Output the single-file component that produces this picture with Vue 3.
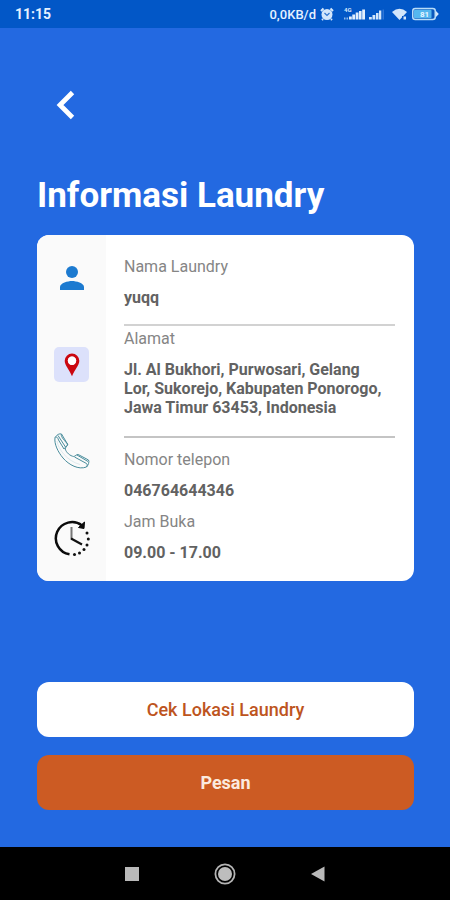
<script setup>
const address = [
  'Jl. Al Bukhori, Purwosari, Gelang',
  'Lor, Sukorejo, Kabupaten Ponorogo,',
  'Jawa Timur 63453, Indonesia'
].join('\n')
</script>

<template>
  <div class="screen">
    <header class="status">
      <span class="time">11:15</span>
      <div class="indicators">
        <span class="rate">0,0KB/d</span>
        <svg class="alarm" width="14" height="14" viewBox="0 0 14 14" aria-hidden="true">
          <circle cx="7" cy="7.5" r="5.5" fill="#d3e6fb" />
          <path d="M1 4 3.500 1.500M13 4 10.500 1.500M3 12 2 13M11 12 12 13" stroke="#d3e6fb" stroke-width="2" />
          <path d="M4.500 6 7 8.500 9.500 6" fill="none" stroke="#2f74cf" stroke-width="1.200" />
        </svg>
        <svg class="signal-first" width="24" height="14" viewBox="0 0 24 14" aria-hidden="true">
          <text x="2" y="5" class="net">4G</text>
          <path d="M7 12.500V9.500h2.800v3zM10.300 12.500V7.500h2.800v5zM13.700 12.500V5.500h2.800v7zM17 12.500V4h2.600v8.500zM20.200 12.500V2.500h2.800v10z" fill="#e3effc" />
          <path d="M2 12.500v-2h1.500v2zM4.500 12.500v-2h1.500v2z" fill="#8db9ec" />
        </svg>
        <svg width="16" height="14" viewBox="0 0 16 14" aria-hidden="true">
          <path d="M0 12.500V10h2.800v2.500zM3.500 12.500V8h2.800v4.500zM7 12.500V6h2.500v6.500zM10 12.500V3.500h2.300v9z" fill="#d3e6fb" />
          <path d="M13.500 12.500V2.500H15v10z" fill="#2f76d6" />
        </svg>
        <svg class="wifi" width="16" height="14" viewBox="0 0 16 14" aria-hidden="true">
          <path d="M0 5Q7.500-1.500 15 5L7.500 13z" fill="#d3e6fb" />
          <path d="M10 9h5v4h-5z" fill="#0757c7" />
          <path d="M11.500 9.500H14V12.500h-2.500z" fill="#d3e6fb" />
        </svg>
        <svg width="27" height="14" viewBox="0 0 27 14" aria-hidden="true">
          <rect x=".75" y="1.500" width="22.500" height="11" rx="2.500" fill="#0b58bd" stroke="#b8dcf8" stroke-width="1.500" />
          <rect x="2" y="2.750" width="17.500" height="8.500" rx="1" fill="#55b7ef" />
          <path d="M24 4 26.800 7 24 10z" fill="#d3e6fb" />
          <text x="8" y="10" class="charge">81</text>
        </svg>
      </div>
    </header>

    <main class="content">
      <button class="back" type="button" aria-label="Kembali">
        <svg width="20" height="30" viewBox="0 0 20 30" aria-hidden="true">
          <path d="M17.500 2.500 5 15 17.500 27.500" fill="none" stroke="#fff" stroke-width="4.800" />
        </svg>
      </button>

      <h1>Informasi Laundry</h1>

      <section class="card">
        <div class="icons" aria-hidden="true">
          <div class="cell">
            <svg width="24" height="24" viewBox="0 0 24 24">
              <circle cx="12" cy="6" r="6" fill="#1c7ad0" />
              <path d="M0 24v-3c0-4 8-6 12-6s12 2 12 6v3z" fill="#1c7ad0" />
            </svg>
          </div>
          <div class="cell">
            <div class="pin">
              <svg width="16" height="24" viewBox="0 0 16 24">
                <path fill-rule="evenodd" d="M8 .5a7.300 7.300 0 0 0-7.300 7.300c0 4.700 4.800 9 7.300 15.500 2.500-6.500 7.300-10.800 7.300-15.500A7.300 7.300 0 0 0 8 .5zm0 3a4.200 4.200 0 1 1 0 8.400 4.200 4.200 0 0 1 0-8.400z" fill="#cb0710" />
                <circle cx="8" cy="7.700" r="4.200" fill="#fff" />
              </svg>
            </div>
          </div>
          <div class="cell">
            <svg width="36" height="36" viewBox="0 0 36 36" fill="none" stroke="#4a8d9c" stroke-width="1" stroke-linejoin="round">
              <path d="M1 4.500C3 1.500 5.500.3 7.500 1L13.500 11c.3 2-2.500 3.500-2.300 5 1 3.500 5 7 8.500 7.500 1.500 0 3-2.500 4.500-2L34.500 27c1 1.500 0 5-2 7-8 3-17.500-2-23.500-9C4 19 0 11 1 4.500z" />
              <path d="M1.500 4.500C3 3.500 4 5 4.500 7l5.500 9M4 2.500 11.500 14M7.500 1C6.500 3 9 6 13.500 11M20.500 24l12 6.500c.8.5 1 2 0 3.500M23 22l11 6.500M10 16c0-1 3-2.500 4-5" />
              <path d="M3 8c1 8 10 20 23 23.500" stroke="#cfe2e6" stroke-width=".7" />
            </svg>
          </div>
          <div class="cell">
            <svg width="36" height="36" viewBox="0 0 36 36" fill="none">
              <path d="M15.500 34.300A16.200 16.200 0 1 1 28 5.500" stroke="#0b0b0b" stroke-width="2.500" />
              <path d="M30.500 2 30 8.500 24.500 7.500z" fill="#0b0b0b" stroke="#0b0b0b" />
              <path d="M17.500 7v12" stroke="#777" stroke-width="2" />
              <path d="m17 18.500 11 6" stroke="#111" stroke-width="2.200" />
              <g fill="#111">
                <circle cx="33" cy="13" r="1.500" />
                <circle cx="34.300" cy="19" r="1.500" />
                <circle cx="33" cy="25" r="1.500" />
                <circle cx="30" cy="29.500" r="1.500" />
                <circle cx="25.500" cy="33" r="1.500" />
                <circle cx="20.500" cy="34.500" r="1.500" />
              </g>
            </svg>
          </div>
        </div>

        <dl class="details">
          <div class="entry">
            <dt>Nama Laundry</dt>
            <dd>yuqq</dd>
          </div>
          <div class="entry address">
            <dt>Alamat</dt>
            <dd>{{ address }}</dd>
          </div>
          <div class="entry contact">
            <dt>Nomor telepon</dt>
            <dd>046764644346</dd>
          </div>
          <div class="entry hours">
            <dt>Jam Buka</dt>
            <dd>09.00 - 17.00</dd>
          </div>
        </dl>
      </section>

      <div class="actions">
        <button class="action locate" type="button">Cek Lokasi Laundry</button>
        <button class="action order" type="button">Pesan</button>
      </div>
    </main>

    <nav class="system" aria-label="Navigasi sistem">
      <button type="button" aria-label="Aplikasi terbaru">
        <svg width="22" height="22" viewBox="0 0 22 22"><path d="M4 4h14v14H4z" fill="#b9b9b9" /></svg>
      </button>
      <button type="button" aria-label="Beranda">
        <svg width="22" height="22" viewBox="0 0 22 22">
          <circle cx="11" cy="11" r="9.600" fill="none" stroke="#b4b4b4" stroke-width="1.800" />
          <circle cx="11" cy="11" r="7" fill="#bdbdbd" />
        </svg>
      </button>
      <button type="button" aria-label="Kembali ke layar sebelumnya">
        <svg width="22" height="22" viewBox="0 0 22 22"><path d="M4 11 17.500 3.500v15z" fill="#b9b9b9" /></svg>
      </button>
    </nav>
  </div>
</template>

<style>
body {
  margin: 0;
  background: #2369e1;
}
</style>

<style scoped>
.screen {
  display: flex;
  flex-direction: column;
  min-height: 100vh;
  background: #2369e1;
  font-family: Roboto, "Liberation Sans", sans-serif;
}

button {
  display: flex;
  align-items: center;
  justify-content: center;
  margin: 0;
  padding: 0;
  border: 0;
  background: none;
  font-family: inherit;
  cursor: pointer;
}

.status {
  display: flex;
  align-items: center;
  justify-content: space-between;
  height: 28px;
  padding: 0 11px 0 15px;
  background: #0257c7;
  color: #e6f1ff;
}

.time {
  font-size: 14px;
  font-weight: 700;
  line-height: 20px;
}

.indicators {
  display: flex;
  align-items: center;
}

.rate {
  font-size: 13px;
  font-weight: 500;
}

.alarm {
  margin: 0 8px 0 4px;
}

.signal-first {
  margin-right: 3px;
}

.wifi {
  margin: 0 4px 0 7px;
}

.net {
  fill: #d3e6fb;
  font-size: 6px;
  font-weight: 700;
}

.charge {
  fill: #e9f6ff;
  font-size: 8px;
  font-weight: 700;
}

.content {
  display: flex;
  flex: 1;
  flex-direction: column;
  padding: 62px 36px 37px 37px;
}

.back {
  align-self: flex-start;
  width: 56px;
  height: 30px;
}

h1 {
  margin: 56px 0 0;
  color: #fff;
  font-size: 35px;
  font-weight: 700;
  line-height: 40px;
}

.card {
  display: flex;
  margin-top: 19px;
  border-radius: 12px;
  background: #fff;
  overflow: hidden;
}

.icons {
  display: grid;
  grid-template-rows: repeat(4, 1fr);
  flex: 0 0 69px;
  background: #fafafa;
}

.cell {
  display: flex;
  align-items: center;
  justify-content: center;
}

.pin {
  display: flex;
  align-items: center;
  justify-content: center;
  width: 35px;
  height: 35px;
  border-radius: 5px;
  background: #dce1fb;
}

.details {
  flex: 1;
  margin: 0;
  padding: 22px 19px 19px 18px;
  font-size: 16px;
  line-height: 19px;
}

dt {
  color: #858585;
}

dd {
  margin: 12px 0 0;
  color: #626262;
  font-weight: 700;
  white-space: pre-line;
}

.address {
  margin-top: 17px;
  padding-top: 3px;
  border-top: 2px solid #d2d2d2;
}

.contact {
  margin-top: 19px;
  padding-top: 12px;
  border-top: 2px solid #c4c4c4;
}

.hours {
  margin-top: 12px;
}

.actions {
  display: flex;
  flex-direction: column;
  gap: 18px;
  margin-top: auto;
}

.action {
  height: 55px;
  border-radius: 12px;
  font-size: 18px;
}

.locate {
  background: #fff;
  color: #bd5420;
  font-weight: 500;
}

.order {
  background: #cc5b23;
  color: #fbeadf;
  font-weight: 700;
}

.system {
  display: flex;
  align-items: center;
  justify-content: center;
  gap: 71px;
  height: 53px;
  background: #000;
}
</style>
